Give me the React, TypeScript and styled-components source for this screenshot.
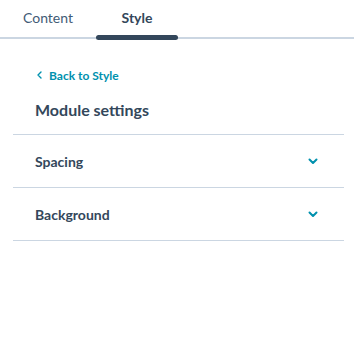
import React from "react";
import styled, { createGlobalStyle } from "styled-components";

const GlobalStyle = createGlobalStyle`
  html, body {
    margin: 0;
    padding: 0;
    background: #ffffff;
    font-family: "Lato", "Open Sans", sans-serif;
    color: #33475b;
  }
`;

const TabBar = styled.div`
  display: flex;
  height: 37px;
  border-bottom: 2px solid #cbd6e2;
`;

const Tab = styled.div<{ $active?: boolean; $width: number }>`
  position: relative;
  width: ${(p) => p.$width}px;
  display: flex;
  justify-content: center;
  align-items: center;
  padding-bottom: 3px;
  box-sizing: border-box;
  font-size: 14px;
  font-weight: ${(p) => (p.$active ? 700 : 400)};
  color: ${(p) => (p.$active ? "#33475b" : "#425b76")};
  &::after {
    content: "";
    display: ${(p) => (p.$active ? "block" : "none")};
    position: absolute;
    left: 0;
    right: 0;
    bottom: -3px;
    height: 5px;
    border-radius: 3px;
    background: #33475b;
  }
`;

const Panel = styled.div`
  padding: 0 10px 0 13px;
`;

const Header = styled.div`
  padding: 28px 0 0 22px;
  height: 96px;
  box-sizing: border-box;
  border-bottom: 1px solid #cbd6e2;
`;

const BackLink = styled.a`
  display: flex;
  align-items: center;
  gap: 7px;
  margin-left: 2px;
  font-size: 12px;
  font-weight: 700;
  color: #0091ae;
  text-decoration: none;
  height: 16px;
`;

const Title = styled.h2`
  margin: 17px 0 0;
  font-size: 16px;
  font-weight: 700;
  color: #33475b;
  line-height: 20px;
`;

const Row = styled.div`
  display: flex;
  align-items: center;
  justify-content: space-between;
  height: 52px;
  padding: 0 26px 0 22px;
  border-bottom: 1px solid #cbd6e2;
  font-size: 14px;
  font-weight: 700;
  color: #33475b;
`;

const Chevron = () => (
  <svg width="10" height="7" viewBox="0 0 10 7">
    <path d="M1.5 1.5 L5 5 L8.5 1.5" fill="none" stroke="#0091ae" strokeWidth="2" strokeLinecap="round" strokeLinejoin="round" />
  </svg>
);

const BackChevron = () => (
  <svg width="5" height="8" viewBox="0 0 5 8">
    <path d="M4 1 L1 4 L4 7" fill="none" stroke="#0091ae" strokeWidth="1.4" strokeLinecap="round" strokeLinejoin="round" />
  </svg>
);

export default function App() {
  return (
    <>
      <GlobalStyle />
      <TabBar>
        <Tab $width={96}>Content</Tab>
        <Tab $width={82} $active>
          Style
        </Tab>
      </TabBar>
      <Panel>
        <Header>
          <BackLink href="#">
            <BackChevron />
            Back to Style
          </BackLink>
          <Title>Module settings</Title>
        </Header>
        <Row>
          Spacing
          <Chevron />
        </Row>
        <Row>
          Background
          <Chevron />
        </Row>
      </Panel>
    </>
  );
}
